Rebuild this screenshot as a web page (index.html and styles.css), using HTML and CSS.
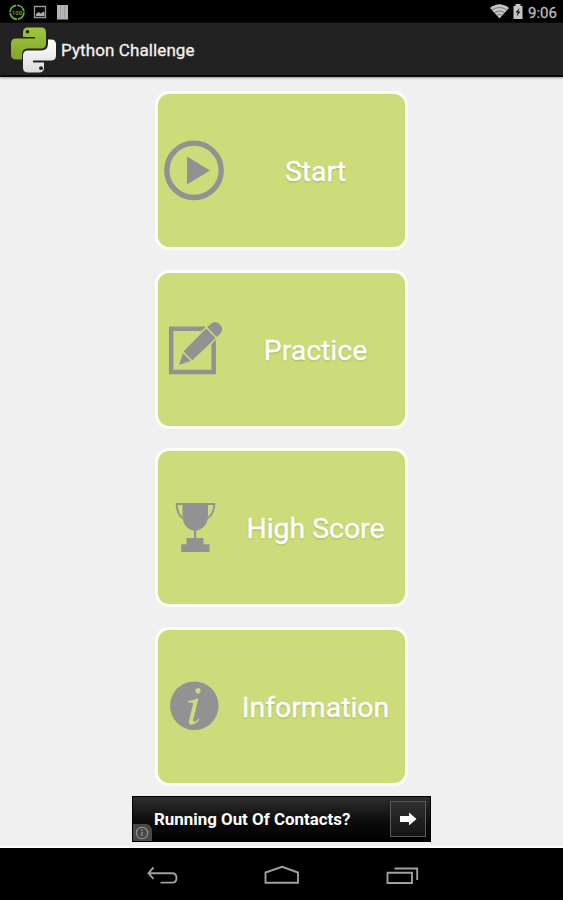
FILE: index.html
```html
<!DOCTYPE html>
<html lang="en">
<head>
<meta charset="utf-8">
<title>Python Challenge</title>
<link rel="stylesheet" href="styles.css">
</head>
<body>
<header class="status">
  <svg class="status-left" width="80" height="23" viewBox="0 0 80 23">
    <circle cx="17" cy="12.300" r="6.900" fill="none" stroke="#62ad33" stroke-width="1.900" stroke-dasharray="9.800 1"/>
    <text x="17" y="14.600" text-anchor="middle" class="percent">100</text>
    <path d="M34.500 6.500h11v11h-11z" fill="none" stroke="#999" stroke-width="1.300"/>
    <path d="M36 16v-2l2.500-2 2.500 1.500 2.500-2 1 1v3.500z" fill="#aaa"/>
    <path d="M57 5h11v14.500H57z" fill="#b4b4b4"/>
    <path d="M60.500 5v14.500M64.500 5v14.500" stroke="#999" stroke-width=".8"/>
  </svg>
  <div class="status-right">
    <svg width="34" height="23" viewBox="490 0 34 23">
      <path d="M490 8Q499.500.500 509 8L499.500 18.500z" fill="#c4c4c4"/>
      <path d="M492 10q7.500-5 15 0M494.500 12.700q5-3.200 10 0M496.800 15.200q2.700-1.600 5.400 0" fill="none" stroke="#555" stroke-width=".7"/>
      <path d="M513.500 6h2V4h5v2h2v13h-9z" fill="#c4c4c4"/>
      <path d="M519.500 8l-4 4.500h2.200l-1 4 3.800-5h-2.200z" fill="#111"/>
    </svg>
    <span class="clock">9:06</span>
  </div>
</header>
<div class="actionbar">
  <svg class="logo" width="47" height="48" viewBox="10 25.500 47 48">
    <defs>
      <linearGradient id="g" x1="0" y1="0" x2="0" y2="1"><stop offset="0" stop-color="#a0c63c"/><stop offset="1" stop-color="#7fa52b"/></linearGradient>
      <linearGradient id="w" x1="0" y1="0" x2="0" y2="1"><stop offset="0" stop-color="#fff"/><stop offset="1" stop-color="#dcdcdc"/></linearGradient>
    </defs>
    <path fill="url(#g)" d="M23 32q0-5 5-5h13q5 0 5 5v11q0 5-5 5H28q-6 0-6 6v5h-6q-5 0-5-5V43q0-5 5-5h19v-1.500H23z"/>
    <path fill="url(#w)" d="M44 67q0 5-5 5H28q-5 0-5-5V55q0-5 5-5h13q7 0 7-7v-4h3q5 0 5 5v11q0 5-5 5H33v2h11z"/>
    <circle cx="27.500" cy="31.300" r="1.800" fill="#1b2408"/>
    <circle cx="41" cy="67.700" r="1.900" fill="#222"/>
  </svg>
  <h1 class="title">Python Challenge</h1>
</div>
<main class="content">
  <nav class="menu">
    <a class="card">
      <svg class="icon" width="72" height="64" viewBox="158 139 72 64">
        <circle cx="194" cy="170.300" r="27.200" fill="none" stroke="#929292" stroke-width="5.400"/>
        <path d="M187 156.500v28l23-14z" fill="#929292"/>
      </svg>
      <span class="label">Start</span>
    </a>
    <a class="card">
      <svg class="icon" width="72" height="64" viewBox="158 317.500 72 64">
        <path d="M171.200 329.200h42.500v43.300h-42.500z" fill="none" stroke="#929292" stroke-width="4.500"/>
        <path d="M179 365.500l4.500-13.500 26-26.500q6-6 11 0 4 5-1.500 10l-27 25.500z" fill="#929292" stroke="#cddc7a" stroke-width="3" paint-order="stroke"/>
        <path d="M205.500 327l11.500 12M183 352.500l9 9" stroke="#cddc7a" stroke-width="1.700"/>
      </svg>
      <span class="label">Practice</span>
    </a>
    <a class="card">
      <svg class="icon" width="72" height="64" viewBox="158 496 72 64">
        <path d="M182.500 503H208v12q0 10-6.500 13.500-2.500 1.800-5.300 2V538h7.300v6.300h6v7.700h-28.300v-7.700h5.300V538h7.500v-7.500q-3-.2-5.500-2-6-3.500-6-13.500z" fill="#929292"/>
        <path d="M183 504h-6.300q.3 12 8.300 15.500M207 504h7.300q-.3 12-9.300 15.500" fill="none" stroke="#929292" stroke-width="1.900"/>
      </svg>
      <span class="label">High Score</span>
    </a>
    <a class="card">
      <svg class="icon" width="72" height="64" viewBox="158 674 72 64">
        <circle cx="194.300" cy="705.800" r="24.300" fill="#929292"/>
        <ellipse cx="198" cy="690.800" rx="2.500" ry="2.800" fill="#cddc7a"/>
        <path d="M188 701q5-.5 9-2.500h1.500l-5.300 21q-.8 3 1.800 2 1.800-.8 3.700-2.700l.8.800q-4 5-7.800 5.200-3.700 0-2.700-4.300l4-16q.6-2-1.500-2h-3.700z" fill="#cddc7a"/>
      </svg>
      <span class="label">Information</span>
    </a>
  </nav>
  <aside class="ad">
    <svg class="ad-info" width="19" height="18" viewBox="0 0 19 18">
      <path d="M0 1h14q5 1 5 8v9H0z" fill="#484848"/>
      <circle cx="9" cy="10" r="5.700" fill="none" stroke="#999" stroke-width="1.100"/>
      <path d="M9 9v4M9 6.500V8" stroke="#999" stroke-width="1.300"/>
    </svg>
    <span class="ad-text">Running Out Of Contacts?</span>
    <span class="ad-go">
      <svg width="18" height="16" viewBox="0 0 18 16"><path d="M1 5h9V1.500L17.500 8 10 14.500V11H1z" fill="#fff"/></svg>
    </span>
  </aside>
</main>
<footer class="navbar">
  <svg width="563" height="52" viewBox="0 848 563 52" fill="none" stroke="#a0a0a0" stroke-width="1.900">
    <path d="M153.500 867.500l-5 5.700 5 5.800M149 873.200h23q4.500 0 4.500 4.700t-4.500 4.700h-11.500"/>
    <path d="M265.500 882.700v-10.200l16.500-5.700 16 5.700v10.200z"/>
    <path d="M387.500 872.800H412v10.200h-24.500zM394.500 868.500h22.700V880"/>
  </svg>
</footer>
</body>
</html>
```
FILE: styles.css
```css
* { box-sizing: border-box; }
body {
  margin: 0;
  width: 563px;
  height: 900px;
  overflow: hidden;
  display: flex;
  flex-direction: column;
  background: #f0f0f0;
  font-family: Roboto, "Liberation Sans", sans-serif;
}
svg { display: block; flex: none; }
.status {
  height: 23px;
  background: #000;
  display: flex;
  justify-content: space-between;
}
.status-right { display: flex; padding-right: 5px; gap: 4px; }
.clock { color: #bcbcbc; font-size: 15px; line-height: 26px; width: 30px; white-space: nowrap; -webkit-text-stroke: .3px #bcbcbc; }
.percent { font-size: 6px; font-weight: 700; fill: #5b9e35; }
.actionbar {
  height: 54px;
  background: #222;
  border-bottom: 2px solid #0c0c0c;
  box-shadow: 0 1px 2px #999;
  display: flex;
  align-items: center;
  padding-left: 10px;
  gap: 4px;
}
.logo { margin-top: 1px; }
.title {
  margin: 0;
  color: #f2f2f2;
  font-size: 17px;
  font-weight: 400;
  letter-spacing: .1px;
  line-height: 24px;
  padding-top: 2px;
  -webkit-text-stroke: .3px #f2f2f2;
}
.content {
  flex: 1;
  display: flex;
  flex-direction: column;
  align-items: center;
  padding-top: 14px;
  border-bottom: 2px solid #fff;
}
.menu { display: grid; gap: 19.600px; }
.card {
  width: 253px;
  height: 159px;
  border: 3px solid #fdfef6;
  border-radius: 14px;
  background: #cddc7a;
  display: flex;
  align-items: center;
}
.label {
  flex: 1;
  text-align: center;
  padding-right: 4px;
  padding-top: 3px;
  color: #fff;
  font-size: 28.400px;
  line-height: 34px;
  white-space: nowrap;
  text-shadow: 0 1px 2px rgba(90, 100, 40, .4);
  -webkit-text-stroke: .4px #fff;
}
.ad {
  position: relative;
  width: 299px;
  height: 46px;
  margin-top: 10.700px;
  border: 1px solid #000;
  background: linear-gradient(#2e2e2e, #0c0c0c 55%, #000);
  display: flex;
  align-items: center;
  justify-content: space-between;
  padding: 0 4px 0 21px;
}
.ad-info { position: absolute; left: 0; bottom: 0; }
.ad-text { color: #fff; font-size: 16.900px; font-weight: 700; white-space: nowrap; }
.ad-go {
  width: 36px;
  height: 36px;
  border: 1.500px solid #5a5a5a;
  background: linear-gradient(#303030, #151515);
  display: flex;
  align-items: center;
  justify-content: center;
}
.navbar { height: 52px; background: #000; }
```
